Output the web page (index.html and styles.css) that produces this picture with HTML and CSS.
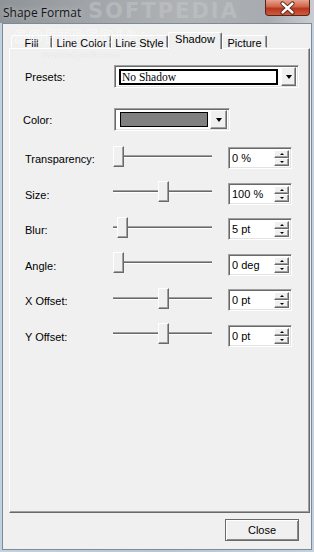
FILE: index.html
```html
<!DOCTYPE html>
<html lang="en">
<head>
  <meta charset="UTF-8" />
  <title>Shape Format</title>
  <link rel="stylesheet" href="styles.css">
</head>
<body>

  <div class="window">
    <div class="titlebar">
      <div class="title">Shape Format</div>
      <div class="watermark">SOFTPEDIA</div>
      <div class="close-x">
        <svg width="45" height="16" viewBox="0 0 45 16">
          <path d="M17.5 3.5 L27.5 12.5 M27.5 3.5 L17.5 12.5" stroke="#4a1a12" stroke-width="4.2" stroke-linecap="round"/>
          <path d="M17.5 3.5 L27.5 12.5 M27.5 3.5 L17.5 12.5" stroke="#ffffff" stroke-width="2.4" stroke-linecap="round"/>
        </svg>
      </div>
    </div>

    <div class="client">
      <div class="tabstrip">
        <div class="tab tab-fill">Fill</div>
        <div class="tab tab-linecolor">Line Color</div>
        <div class="tab tab-linestyle">Line Style</div>
        <div class="tab tab-shadow active">Shadow</div>
        <div class="tab tab-picture">Picture</div>
        <div class="tab-watermark">SOFTPEDIA<sup>™</sup></div>
      </div>

      <div class="panel">
        <div class="site-mark">www.softpedia.com</div>

        <div class="row row-presets">
          <div class="label">Presets:</div>
          <div class="combo sunken combo-presets">
            <div class="combo-text">No Shadow</div>
            <div class="drop-btn raised"><span class="arrow-down"></span></div>
          </div>
        </div>

        <div class="row row-color">
          <div class="label label-color">Color:</div>
          <div class="combo sunken combo-color">
            <div class="swatch"></div>
            <div class="drop-btn raised"><span class="arrow-down"></span></div>
          </div>
        </div>

        <div class="row slider-row">
          <div class="label">Transparency:</div>
          <div class="slider"><div class="track"></div><div class="thumb" style="left: 0px"></div></div>
          <div class="spin sunken">
            <div class="spin-value">0 %</div>
            <div class="spin-buttons">
              <div class="spin-btn raised"><span class="arrow-up-sm"></span></div>
              <div class="spin-btn raised"><span class="arrow-down-sm"></span></div>
            </div>
          </div>
        </div>

        <div class="row slider-row">
          <div class="label">Size:</div>
          <div class="slider"><div class="track"></div><div class="thumb" style="left: 45px"></div></div>
          <div class="spin sunken">
            <div class="spin-value">100 %</div>
            <div class="spin-buttons">
              <div class="spin-btn raised"><span class="arrow-up-sm"></span></div>
              <div class="spin-btn raised"><span class="arrow-down-sm"></span></div>
            </div>
          </div>
        </div>

        <div class="row slider-row">
          <div class="label">Blur:</div>
          <div class="slider"><div class="track"></div><div class="thumb" style="left: 4px"></div></div>
          <div class="spin sunken">
            <div class="spin-value">5 pt</div>
            <div class="spin-buttons">
              <div class="spin-btn raised"><span class="arrow-up-sm"></span></div>
              <div class="spin-btn raised"><span class="arrow-down-sm"></span></div>
            </div>
          </div>
        </div>

        <div class="row slider-row">
          <div class="label">Angle:</div>
          <div class="slider"><div class="track"></div><div class="thumb" style="left: 0px"></div></div>
          <div class="spin sunken">
            <div class="spin-value">0 deg</div>
            <div class="spin-buttons">
              <div class="spin-btn raised"><span class="arrow-up-sm"></span></div>
              <div class="spin-btn raised"><span class="arrow-down-sm"></span></div>
            </div>
          </div>
        </div>

        <div class="row slider-row">
          <div class="label">X Offset:</div>
          <div class="slider"><div class="track"></div><div class="thumb" style="left: 45px"></div></div>
          <div class="spin sunken">
            <div class="spin-value">0 pt</div>
            <div class="spin-buttons">
              <div class="spin-btn raised"><span class="arrow-up-sm"></span></div>
              <div class="spin-btn raised"><span class="arrow-down-sm"></span></div>
            </div>
          </div>
        </div>

        <div class="row slider-row">
          <div class="label">Y Offset:</div>
          <div class="slider"><div class="track"></div><div class="thumb" style="left: 45px"></div></div>
          <div class="spin sunken">
            <div class="spin-value">0 pt</div>
            <div class="spin-buttons">
              <div class="spin-btn raised"><span class="arrow-up-sm"></span></div>
              <div class="spin-btn raised"><span class="arrow-down-sm"></span></div>
            </div>
          </div>
        </div>
      </div>

      <div class="footer">
        <div class="close-btn">Close</div>
      </div>
    </div>
  </div>

</body>
</html>
```

FILE: styles.css
```css
body {
  margin: 0;
  font-family: "Liberation Sans", Arial, sans-serif;
  font-size: 11px;
  color: #000;
  background: #b4c2d0;
}

.window {
  width: 314px;
  height: 552px;
  display: flex;
  flex-direction: column;
  background: linear-gradient(90deg, #c4d2e0, #b8c6d4 50%, #c4d2e0);
}

/* title bar */
.titlebar {
  height: 23px;
  display: flex;
  align-items: flex-start;
  position: relative;
  overflow: hidden;
  background: linear-gradient(90deg, #8e9398, #a2a6aa 30%, #b0b3b6 60%, #a7abaf 85%, #c9cdd1);
}

.title {
  font-family: "Open Sans", "Liberation Sans", sans-serif;
  font-size: 12px;
  color: #161616;
  padding: 4px 0 0 3px;
  text-shadow: 0 0 6px rgba(255, 255, 255, 0.55);
  position: relative;
  z-index: 1;
}

.watermark {
  position: absolute;
  left: 88px;
  top: 0;
  font-family: "DejaVu Sans", sans-serif;
  font-weight: bold;
  font-size: 21px;
  line-height: 22px;
  letter-spacing: 2px;
  color: rgba(196, 199, 202, 0.5);
}

.close-x {
  margin-left: auto;
  margin-right: 4px;
  width: 43px;
  height: 15px;
  border: 1px solid #5b2218;
  border-top: none;
  border-radius: 0 0 4px 4px;
  background: linear-gradient(180deg, #e6a38f, #d0644a 45%, #b8361d 55%, #cf5a3f);
  position: relative;
  z-index: 1;
}

.close-x svg {
  display: block;
  margin-left: -1px;
}

/* client area */
.client {
  flex: 1;
  margin: 0 2px 2px 2px;
  border: 1px solid #7d8b99;
  background: #f0f0f0;
  display: flex;
  flex-direction: column;
}

.tabstrip {
  display: flex;
  align-items: flex-end;
  height: 16px;
  margin: 8px 0 0 8px;
  position: relative;
}

.tab {
  height: 13px;
  box-sizing: border-box;
  border: 1px solid;
  border-color: #fff #696969 transparent #fff;
  border-radius: 2px 2px 0 0;
  box-shadow: inset -1px 0 #a0a0a0;
  background: #f0f0f0;
  text-align: center;
  line-height: 14px;
  font-size: 11px;
}

.tab-fill { width: 41px; }
.tab-linecolor { width: 59px; }
.tab-linestyle { width: 57px; }
.tab-shadow { width: 54px; }
.tab-picture { width: 45px; }

.tab.active {
  height: 17px;
  margin-bottom: -1px;
  line-height: 13px;
  position: relative;
  z-index: 1;
  border-bottom: none;
}

.tab-watermark {
  position: absolute;
  left: 3px;
  top: -5px;
  font-family: "DejaVu Sans", sans-serif;
  font-weight: bold;
  font-size: 17px;
  letter-spacing: 2px;
  color: transparent;
  -webkit-text-stroke: 0.6px rgba(255, 255, 255, 0.75);
  pointer-events: none;
  z-index: 2;
}

.tab-watermark sup {
  font-size: 6px;
  -webkit-text-stroke: 0;
  color: rgba(255, 255, 255, 0.8);
}

.panel {
  height: 465px;
  box-sizing: border-box;
  margin: 0 1px 0 6px;
  border: 1px solid;
  border-color: #fff #696969 #696969 #fff;
  box-shadow: inset -1px -1px #a0a0a0;
  padding: 16px 0 0 15px;
  position: relative;
}

.site-mark {
  position: absolute;
  left: 32px;
  top: 1px;
  font-size: 9px;
  color: rgba(255, 255, 255, 0.9);
  text-shadow: 0 0 1px #c8c8c8;
}

/* form rows */
.row {
  display: flex;
  align-items: center;
}

.label {
  width: 89px;
  flex-shrink: 0;
}

.label-color {
  margin-left: -2px;
  width: 91px;
}

.row-presets {
  height: 23px;
  margin-bottom: 20px;
}

.row-color {
  height: 23px;
  margin-bottom: 16px;
}

.slider-row {
  height: 22px;
  margin-bottom: 13.6px;
}

.slider-row .label {
  width: 88px;
  padding-top: 2px;
}

/* 3d borders */
.sunken {
  box-sizing: border-box;
  border: 1px solid;
  border-color: #a0a0a0 #fff #fff #a0a0a0;
  box-shadow: inset 1px 1px #696969, inset -1px -1px #e3e3e3;
  background: #fff;
}

.raised {
  box-sizing: border-box;
  border: 1px solid;
  border-color: #fff #696969 #696969 #fff;
  box-shadow: inset -1px -1px #a0a0a0;
  background: #f0f0f0;
}

/* combo boxes */
.combo {
  height: 23px;
  display: flex;
  align-items: center;
  padding: 2px;
}

.combo-presets {
  width: 185px;
}

.combo-text {
  width: 159px;
  height: 16px;
  box-sizing: border-box;
  border: 2px solid #000;
  margin-left: 2px;
  font-family: "Liberation Serif", "Times New Roman", serif;
  font-size: 11.5px;
  line-height: 12px;
  padding-left: 1px;
}

.combo .drop-btn {
  margin-left: auto;
  width: 15px;
  height: 19px;
  display: flex;
  align-items: center;
  justify-content: center;
}

.combo-color {
  width: 116px;
}

.swatch {
  width: 88px;
  height: 15px;
  box-sizing: border-box;
  border: 1px solid #000;
  background: #808080;
  margin-left: 3px;
}

.combo-color .drop-btn {
  width: 17px;
}

.arrow-down {
  width: 0;
  height: 0;
  border-left: 3.5px solid transparent;
  border-right: 3.5px solid transparent;
  border-top: 4px solid #000;
  margin-top: 1px;
}

/* sliders */
.slider {
  width: 99px;
  height: 21px;
  position: relative;
  display: flex;
  align-items: center;
  margin-bottom: 4px;
  flex-shrink: 0;
}

.track {
  width: 100%;
  height: 3px;
  box-sizing: border-box;
  border-top: 1px solid #a0a0a0;
  border-bottom: 1px solid #fff;
  background: #696969;
}

.thumb {
  position: absolute;
  top: 0;
  width: 11px;
  height: 21px;
  box-sizing: border-box;
  border: 1px solid;
  border-color: #fff #696969 #696969 #fff;
  box-shadow: inset -1px -1px #a0a0a0;
  background: #f0f0f0;
}

/* spinners */
.spin {
  margin-left: 16px;
  width: 64px;
  height: 22px;
  display: flex;
  padding: 2px;
}

.spin-value {
  flex: 1;
  padding: 2px 0 0 1px;
  font-size: 11px;
}

.spin-buttons {
  width: 15px;
  display: flex;
  flex-direction: column;
}

.spin-btn {
  flex: 1;
  display: flex;
  align-items: center;
  justify-content: center;
}

.arrow-up-sm {
  width: 0;
  height: 0;
  border-left: 2px solid transparent;
  border-right: 2px solid transparent;
  border-bottom: 2px solid #000;
}

.arrow-down-sm {
  width: 0;
  height: 0;
  border-left: 2px solid transparent;
  border-right: 2px solid transparent;
  border-top: 2px solid #000;
}

/* footer */
.footer {
  display: flex;
  justify-content: flex-end;
  padding: 6px 12px 0 0;
}

.close-btn {
  width: 74px;
  height: 22px;
  box-sizing: border-box;
  border: 1px solid #6a6a6a;
  box-shadow: inset 1px 1px #fff, inset -1px -1px #8a8a8a;
  background: #f0f0f0;
  text-align: center;
  line-height: 20px;
}
```
